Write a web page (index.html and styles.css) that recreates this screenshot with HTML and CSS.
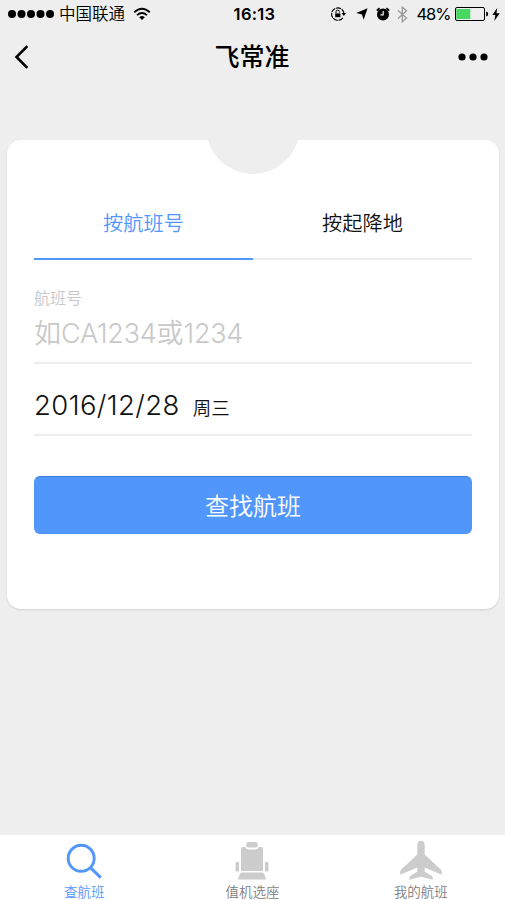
FILE: index.html
```html
<!DOCTYPE html>
<html lang="zh-CN">
<head>
<meta charset="utf-8">
<title>飞常准</title>
<link rel="stylesheet" href="styles.css">
</head>
<body>
<div class="app">
  <header class="status">
    <div class="status-left">
      <svg class="signal" width="46" height="10" viewBox="0 0 46 10"><circle cx="4" cy="5" r="4"/><circle cx="13.5" cy="5" r="4"/><circle cx="23" cy="5" r="4"/><circle cx="32.5" cy="5" r="4"/><circle cx="42" cy="5" r="4"/></svg>
      <span class="carrier">中国联通</span>
      <svg class="wifi" width="18" height="14" viewBox="0 0 18 14"><path d="M1.2 5.2Q9-1.8 16.8 5.2M4 8.1Q9 3.8 14 8.1" fill="none" stroke="#000" stroke-width="1.9"/><path d="M6.2 10.2Q9 8 11.8 10.2L9 13Z"/></svg>
    </div>
    <span class="clock">16:13</span>
    <div class="status-right">
      <svg class="lock" width="15" height="14" viewBox="0 0 15 14"><path d="M11.8 10.8A6.2 6.2 0 1 1 12.9 6" fill="none" stroke="#000" stroke-width="1.1" stroke-dasharray="5 .8"/><path d="M10.6 6H15L12.8 9Z"/><rect x="4.2" y="6.4" width="5.2" height="3.8"/><path d="M5 6.5V4.8a1.7 1.7 0 0 1 3.4 0v.8" fill="none" stroke="#000"/></svg>
      <svg class="location" width="12" height="12" viewBox="0 0 12 12"><path d="M11.6.2 7.6 11.8 6 6.6.2 5.1Z"/></svg>
      <svg class="alarm" width="14" height="14" viewBox="0 0 14 14"><circle cx="7" cy="7.4" r="6"/><path d="M.8 3.6 3.6 1.2M10.4 1.2 13.2 3.6" stroke="#000" stroke-width="1.8"/><path d="M7.2 4v3.8H4.4" fill="none" stroke="#eee" stroke-width="1.2"/></svg>
      <svg class="bluetooth" width="11" height="17" viewBox="0 0 11 17"><path d="M1 4.5 9.5 12 5.3 15.8V1.2L9.5 4.8 1 12.5" fill="none" stroke="#999" stroke-width="1.3"/></svg>
      <span class="percent">48%</span>
      <svg class="battery" width="34" height="14" viewBox="0 0 34 14"><rect x=".5" y=".5" width="29" height="13" rx="1.5" fill="none" stroke="#000"/><rect x="1.3" y="2" width="14" height="10" fill="#47d860"/><path d="M31.2 4.5q2 .3 2 2.5t-2 2.5Z"/></svg>
      <svg class="bolt" width="8" height="13" viewBox="0 0 8 13"><path d="M5.2 0 .3 7h3L2.3 13 7.7 5.3H4.5Z"/></svg>
    </div>
  </header>
  <nav class="titlebar">
    <svg class="back" width="16" height="26" viewBox="0 0 16 26"><path d="M13.3 2.2 2.5 13 13.3 23.8" fill="none" stroke="#000" stroke-width="2.6"/></svg>
    <h1>飞常准</h1>
    <svg class="more" width="30" height="8" viewBox="0 0 30 8"><circle cx="4" cy="4" r="3.6"/><circle cx="15" cy="4" r="3.6"/><circle cx="26" cy="4" r="3.6"/></svg>
  </nav>
  <main class="card">
    <div class="notch"></div>
    <div class="tabs">
      <div class="tab active">按航班号</div>
      <div class="tab">按起降地</div>
    </div>
    <div class="field flight">
      <span class="label">航班号</span>
      <span class="placeholder">如<span class="latin">CA1234</span>或<span class="latin">1234</span></span>
    </div>
    <div class="field date">
      <span class="day">2016/12/28</span>
      <span class="weekday">周三</span>
    </div>
    <button class="search">查找航班</button>
  </main>
  <footer class="tabbar">
    <div class="item current">
      <svg width="44" height="40" viewBox="0 0 44 40"><circle cx="19.2" cy="18.3" r="13" fill="none" stroke="#5196fb" stroke-width="2.9"/><path d="M28.4 27.6 38.8 37.6" stroke="#5196fb" stroke-width="3"/></svg>
      <span>查航班</span>
    </div>
    <div class="item">
      <svg width="44" height="40" viewBox="0 0 44 40"><path d="M11 9q0-2 2-2h2.4q.6 2.6 3 2.6h7.2q2.4 0 3-2.6H31q2 0 2 2v22H11Z"/><rect x="16.2" y="2" width="11.6" height="5.6" rx="2.6"/><rect x="5.5" y="22" width="3.6" height="9.4" rx=".8"/><rect x="34.9" y="22" width="3.6" height="9.4" rx=".8"/><path d="M11.4 32.6h21.2q1 0 1.4 1l2.2 6H7.8l2.2-6q.4-1 1.4-1Z"/></svg>
      <span>值机选座</span>
    </div>
    <div class="item">
      <svg width="44" height="40" viewBox="0 0 44 40"><path d="M22 .8c2.5 0 3.7 2 3.7 4.4v9.2L42 29.7q.8.8.8 2v3.1L25.7 27.5v4.2l6.8 4.1q1.4.9 1.4 3.9L22 36.8 10.1 39.7q0-3 1.4-3.9l6.8-4.1v-4.2L1.2 34.8v-3.1q0-1.2.8-2l16.3-15.3V5.2C18.3 2.8 19.5.8 22 .8Z"/></svg>
      <span>我的航班</span>
    </div>
  </footer>
</div>
</body>
</html>
```
FILE: styles.css
```css
* { box-sizing: border-box; }
body {
  margin: 0;
  background: #eee;
  color: #111;
  font-family: Inter, "Noto Sans CJK SC", sans-serif;
  font-weight: 350;
}
svg { display: block; flex: none; }
.app {
  height: 900px;
  display: flex;
  flex-direction: column;
}
.status {
  height: 28px;
  display: grid;
  grid-template-columns: 1fr auto 1fr;
  align-items: center;
  padding: 0 6px 0 8px;
  font-size: 16.5px;
  font-weight: 400;
  line-height: 28px;
  color: #000;
}
.status-left, .status-right { display: flex; align-items: center; }
.status-right { justify-content: flex-end; }
.carrier { margin: 0 8px 0 5px; font-weight: 350; }
.clock { font-weight: 600; letter-spacing: .3px; padding-left: 2px; }
.location { margin-left: 10px; }
.alarm { margin-left: 8px; }
.bluetooth { margin-left: 7px; }
.percent { margin: 0 4.5px 0 8px; letter-spacing: -1px; }
.bolt { margin: 0 -1px 0 3px; }
.titlebar {
  height: 58px;
  display: grid;
  grid-template-columns: 1fr auto 1fr;
  align-items: center;
  padding: 0 17px 0 14px;
}
.titlebar h1 {
  margin: 0;
  padding-left: 2px;
  font-size: 25px;
  line-height: 58px;
  font-weight: 500;
  color: #000;
}
.more { justify-self: end; }
.card {
  position: relative;
  height: 469px;
  margin: 54px 6px 0 7px;
  padding: 45px 27px 0;
  background: #fff;
  border-radius: 14px;
  box-shadow: 0 1px 2px rgba(0, 0, 0, .12);
}
.notch {
  position: absolute;
  top: 0;
  left: 50%;
  width: 94px;
  height: 34px;
  margin-left: -47px;
  background: radial-gradient(circle at 47px -13px, #eee 46.5px, transparent 47.2px);
}
.tabs { display: flex; }
.tab {
  flex: 1;
  height: 75px;
  border-bottom: 2px solid #ececec;
  font-size: 20.2px;
  line-height: 77px;
  text-align: center;
}
.tab.active { color: #5196fb; border-color: #5196fb; }
.field { border-bottom: 2px solid #eee; }
.flight {
  height: 104px;
  padding-top: 27px;
  display: flex;
  flex-direction: column;
  color: #c8c8c8;
}
.label { font-size: 16px; line-height: 22px; }
.placeholder { font-size: 27px; line-height: 50px; white-space: nowrap; }
.latin { letter-spacing: -.25px; }
.date {
  height: 72px;
  display: flex;
  align-items: baseline;
  line-height: 83px;
}
.day { font-size: 27.5px; letter-spacing: .4px; }
.weekday { margin-left: 13px; font-size: 18.5px; }
.search {
  display: block;
  width: 100%;
  height: 58px;
  margin-top: 40px;
  padding: 0;
  border: 1px solid #5196fb;
  border-top-color: #3c7cdc;
  border-radius: 6px;
  background: #5196fb;
  color: #fff;
  font-family: "Noto Sans CJK SC", sans-serif;
  font-size: 24px;
  font-weight: 350;
  line-height: 56px;
}
.tabbar {
  height: 65px;
  margin-top: auto;
  display: grid;
  grid-template-columns: repeat(3, 1fr);
  background: #fff;
}
.item {
  display: flex;
  flex-direction: column;
  align-items: center;
  padding-top: 5px;
  font-size: 13.5px;
  line-height: 24px;
  color: #808080;
}
.item svg { fill: #ccc; }
.item.current { color: #5196fb; }
```
